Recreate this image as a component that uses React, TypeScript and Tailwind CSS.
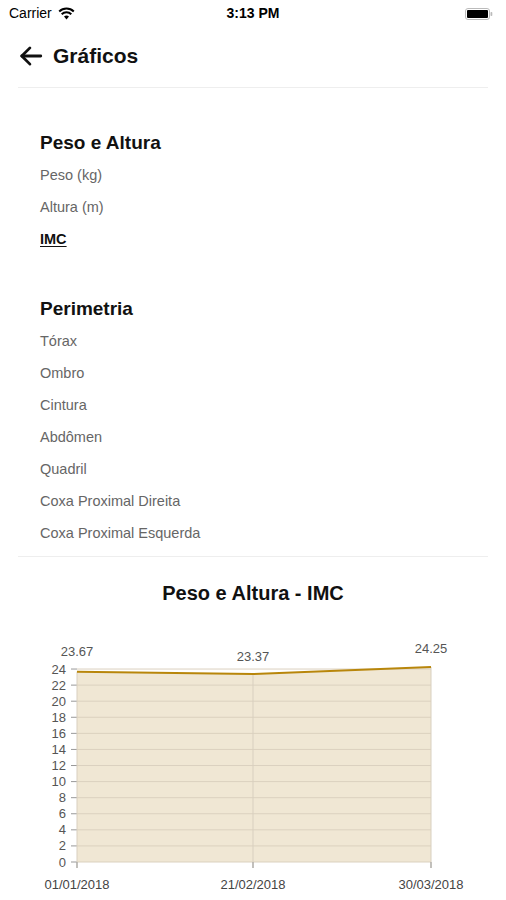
import React from "react";

const font = { fontFamily: '"Liberation Sans", Arial, sans-serif' };

const sections = [
  {
    title: "Peso e Altura",
    items: ["Peso (kg)", "Altura (m)", "IMC"],
    active: "IMC",
  },
  {
    title: "Perimetria",
    items: [
      "Tórax",
      "Ombro",
      "Cintura",
      "Abdômen",
      "Quadril",
      "Coxa Proximal Direita",
      "Coxa Proximal Esquerda",
    ],
    active: "",
  },
];

const points = [
  { x: 77, v: 23.67, date: "01/01/2018", dy: 20 },
  { x: 253, v: 23.37, date: "21/02/2018", dy: 18 },
  { x: 431, v: 24.25, date: "30/03/2018", dy: 19 },
];

function StatusBar() {
  return (
    <div className="relative h-[27px] flex items-center px-[9px] text-[14px] text-black">
      <div className="flex items-center gap-[6px]">
        <span>Carrier</span>
        <svg width="17" height="13" viewBox="0 0 17 13">
          <path d="M8.5 12.5 L6 9.6 A3.6 3.6 0 0 1 11 9.6 Z" fill="#000" />
          <path d="M3.7 7.2 A6.8 6.8 0 0 1 13.3 7.2" stroke="#000" strokeWidth="2" fill="none" />
          <path d="M1.2 4.5 A10.5 10.5 0 0 1 15.8 4.5" stroke="#000" strokeWidth="2" fill="none" />
        </svg>
      </div>
      <span className="absolute left-1/2 -translate-x-1/2 font-semibold">3:13 PM</span>
      <svg className="ml-auto mr-[4px]" width="28" height="12" viewBox="0 0 28 12">
        <rect x="0.5" y="0.5" width="24" height="11" rx="2.5" fill="none" stroke="#bbb" />
        <rect x="2" y="2" width="21" height="8" rx="1" fill="#000" />
        <rect x="25.5" y="4" width="1.8" height="4" rx="0.8" fill="#bbb" />
      </svg>
    </div>
  );
}

function Chart() {
  const y = (v: number) => 232 - v * 8.04;
  const ticks = Array.from({ length: 13 }, (_, i) => i * 2);
  const line = points.map((p) => `${p.x},${y(p.v)}`).join(" ");
  const area = `M77,${y(0)} L${line.split(" ").join(" L")} L431,${y(0)} Z`;
  return (
    <svg width="506" height="270" viewBox="0 0 506 270" className="block">
      <path d={area} fill="#f0e7d4" />
      {ticks.map((t) => (
        <g key={t}>
          <line x1="77" x2="431" y1={y(t)} y2={y(t)} stroke="#dbd1bf" strokeWidth="1" />
          <line x1="71" x2="77" y1={y(t)} y2={y(t)} stroke="#999" strokeWidth="1" />
          <text x="66" y={y(t) + 4.5} textAnchor="end" fontSize="13" fill="#555" style={font}>
            {t}
          </text>
        </g>
      ))}
      {points.map((p) => (
        <g key={p.date}>
          <line x1={p.x} x2={p.x} y1={y(p.v)} y2={y(0) + 6} stroke="#d8cfbf" strokeWidth="1" />
          <line x1={p.x} x2={p.x} y1={y(0)} y2={y(0) + 6} stroke="#999" strokeWidth="1" />
          <text x={p.x} y={y(p.v) - p.dy + 4.5} textAnchor="middle" fontSize="13" fill="#555" style={font}>
            {p.v.toFixed(2)}
          </text>
          <text x={p.x} y="259" textAnchor="middle" fontSize="13" fill="#444" style={font}>
            {p.date}
          </text>
        </g>
      ))}
      <polyline points={line} fill="none" stroke="#b8860b" strokeWidth="2" />
    </svg>
  );
}

export default function App() {
  return (
    <div className="w-[506px] h-[900px] bg-white overflow-hidden" style={font}>
      <StatusBar />
      <div className="h-[58px] flex items-center pl-[18px] gap-[9px]">
        <svg width="26" height="26" viewBox="0 0 24 24" fill="none" stroke="#111" strokeWidth="2.6" strokeLinecap="round" strokeLinejoin="round">
          <path d="M21 12H3.5" />
          <path d="M11 4.5 3.5 12l7.5 7.5" />
        </svg>
        <h1 className="text-[21px] font-bold text-[#111]">Gráficos</h1>
      </div>
      <div className="mx-[18px] mt-[2px] border-b border-[#eeeeee]" />

      <div className="pl-[40px] pt-[43px]">
        {sections.map((s, i) => (
          <div key={s.title} className={i > 0 ? "mt-[41px]" : ""}>
            <h2 className="text-[19px] font-bold text-[#111] leading-[24px]">{s.title}</h2>
            <ul className="mt-[5px]">
              {s.items.map((it) => (
                <li
                  key={it}
                  className={
                    it === s.active
                      ? "h-[32px] flex items-center text-[14.5px] font-bold text-[#111] underline underline-offset-2"
                      : "h-[32px] flex items-center text-[14.5px] text-[#666]"
                  }
                >
                  {it}
                </li>
              ))}
            </ul>
          </div>
        ))}
      </div>

      <div className="mx-[18px] mt-[6px] border-b border-[#eeeeee]" />

      <h3 className="mt-[24px] text-center text-[20px] font-bold text-[#111] leading-[24px]">
        Peso e Altura - IMC
      </h3>
      <div className="mt-[25px]">
        <Chart />
      </div>
    </div>
  );
}
